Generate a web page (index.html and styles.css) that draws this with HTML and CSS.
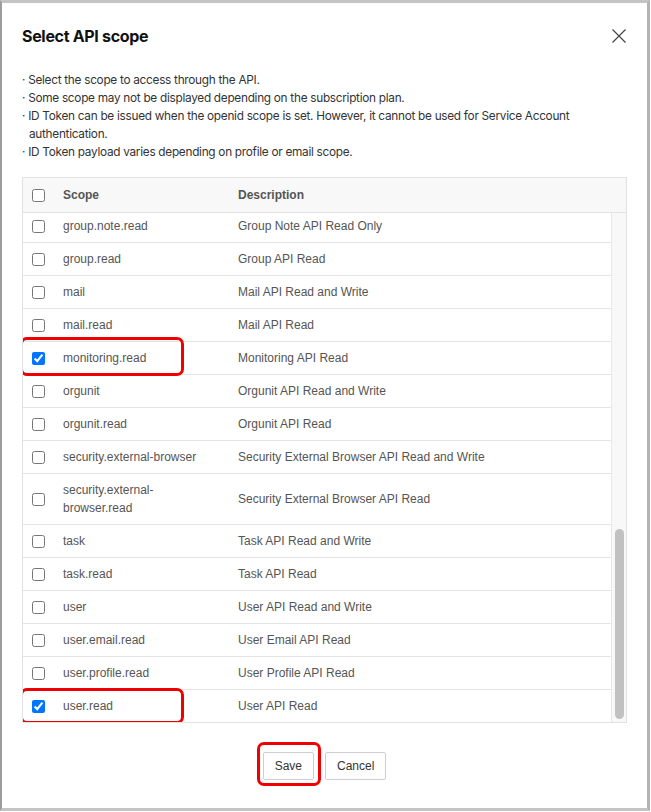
FILE: index.html
```html
<!DOCTYPE html>
<html lang="en">
<head>
<meta charset="utf-8">
<title>Select API scope</title>
<link rel="stylesheet" href="styles.css">
</head>
<body>
<div class="modal">
  <div class="modal-head">
    <h1 class="title">Select API scope</h1>
    <button class="close" type="button" aria-label="Close">
      <svg width="14" height="14" viewBox="0 0 14 14"><path d="M0.5 0.5 L13.5 13.5 M13.5 0.5 L0.5 13.5" stroke="#444" stroke-width="1.2" fill="none"/></svg>
    </button>
  </div>
  <ul class="notes">
    <li>· Select the scope to access through the API.</li>
    <li>· Some scope may not be displayed depending on the subscription plan.</li>
    <li>· ID Token can be issued when the openid scope is set. However, it cannot be used for Service Account authentication.</li>
    <li>· ID Token payload varies depending on profile or email scope.</li>
  </ul>
  <div class="table">
    <div class="row head-row">
      <div class="cell chk"><input type="checkbox"></div>
      <div class="cell scope">Scope</div>
      <div class="cell desc">Description</div>
    </div>
    <div class="tbody">
      <div class="rows">
        <div class="row"><div class="cell chk"><input type="checkbox"></div><div class="cell scope">group.note.read</div><div class="cell desc">Group Note API Read Only</div></div>
        <div class="row"><div class="cell chk"><input type="checkbox"></div><div class="cell scope">group.read</div><div class="cell desc">Group API Read</div></div>
        <div class="row"><div class="cell chk"><input type="checkbox"></div><div class="cell scope">mail</div><div class="cell desc">Mail API Read and Write</div></div>
        <div class="row"><div class="cell chk"><input type="checkbox"></div><div class="cell scope">mail.read</div><div class="cell desc">Mail API Read</div></div>
        <div class="row marked"><div class="cell chk"><input type="checkbox" checked></div><div class="cell scope">monitoring.read</div><div class="cell desc">Monitoring API Read</div><span class="highlight hl-row"></span></div>
        <div class="row"><div class="cell chk"><input type="checkbox"></div><div class="cell scope">orgunit</div><div class="cell desc">Orgunit API Read and Write</div></div>
        <div class="row"><div class="cell chk"><input type="checkbox"></div><div class="cell scope">orgunit.read</div><div class="cell desc">Orgunit API Read</div></div>
        <div class="row"><div class="cell chk"><input type="checkbox"></div><div class="cell scope">security.external-browser</div><div class="cell desc">Security External Browser API Read and Write</div></div>
        <div class="row"><div class="cell chk"><input type="checkbox"></div><div class="cell scope">security.external-browser.read</div><div class="cell desc">Security External Browser API Read</div></div>
        <div class="row"><div class="cell chk"><input type="checkbox"></div><div class="cell scope">task</div><div class="cell desc">Task API Read and Write</div></div>
        <div class="row"><div class="cell chk"><input type="checkbox"></div><div class="cell scope">task.read</div><div class="cell desc">Task API Read</div></div>
        <div class="row"><div class="cell chk"><input type="checkbox"></div><div class="cell scope">user</div><div class="cell desc">User API Read and Write</div></div>
        <div class="row"><div class="cell chk"><input type="checkbox"></div><div class="cell scope">user.email.read</div><div class="cell desc">User Email API Read</div></div>
        <div class="row"><div class="cell chk"><input type="checkbox"></div><div class="cell scope">user.profile.read</div><div class="cell desc">User Profile API Read</div></div>
        <div class="row marked last"><div class="cell chk"><input type="checkbox" checked></div><div class="cell scope">user.read</div><div class="cell desc">User API Read</div><span class="highlight hl-last"></span></div>
      </div>
      <div class="scrollbar"><div class="thumb"></div></div>
    </div>
  </div>
  <div class="actions">
    <span class="marked-btn"><button class="btn" type="button">Save</button><span class="highlight hl-btn"></span></span>
    <button class="btn" type="button">Cancel</button>
  </div>
</div>
</body>
</html>
```
FILE: styles.css
```css
* { box-sizing: border-box; }
html, body { margin: 0; padding: 0; background: #fff; }

.modal {
  width: 650px;
  height: 811px;
  border-top: 3px solid #c4c4c4;
  border-left: 2px solid #9c9c9c;
  border-right: 3px solid #b4b4b4;
  border-bottom: 3px solid #c4c4c4;
  padding: 21px 20px 0 20px;
  font-family: "Liberation Sans", Arial, sans-serif;
  display: flex;
  flex-direction: column;
}

.modal-head {
  display: flex;
  align-items: center;
  justify-content: space-between;
  height: 24px;
}
.title {
  margin: 0;
  font-family: Inter, "Noto Sans", sans-serif;
  font-size: 16px;
  font-weight: 700;
  line-height: 24px;
  color: #111;
  letter-spacing: -0.32px;
}
.close {
  border: 0;
  background: none;
  padding: 0;
  width: 14px;
  height: 14px;
  margin-right: 1px;
  display: block;
}
.close svg { display: block; }

.notes {
  list-style: none;
  margin: 23px 0 0;
  padding: 0;
  font-family: Inter, "Noto Sans", sans-serif;
  font-size: 11.8px;
  line-height: 18px;
  color: #333;
  letter-spacing: -0.28px;
}
.notes li {
  padding-left: 7px;
  text-indent: -7px;
}

.table {
  margin-top: 16px;
  border: 1px solid #e2e2e2;
  display: flex;
  flex-direction: column;
}

.row {
  position: relative;
  display: grid;
  grid-template-columns: 40px 175px 1fr;
  border-bottom: 1px solid #e4e4e4;
  font-size: 12px;
  line-height: 18px;
  color: #555;
}
.row.last { border-bottom: 0; }
.cell {
  padding: 7px 0;
  display: flex;
  align-items: center;
}
.cell.chk { padding-left: 9px; }
.cell.scope { padding-right: 18px; }
.cell input {
  margin: 0;
  width: 13px;
  height: 13px;
}

.head-row {
  background: #f8f8f8;
  font-weight: 700;
  color: #555;
  height: 35px;
  border-bottom: 1px solid #e2e2e2;
}
.head-row .cell { padding-top: 0; padding-bottom: 0; }

.tbody {
  display: flex;
  height: 509px;
}
.rows {
  flex: 1;
  display: flex;
  flex-direction: column;
  justify-content: flex-end;
  overflow: hidden;
}
.rows .row { flex: none; }

.scrollbar {
  width: 15px;
  background: #f8f8f8;
  border-left: 1px solid #e8e8e8;
  display: flex;
  flex-direction: column;
  justify-content: flex-end;
  padding: 0 2px 3px 3px;
}
.thumb {
  height: 190px;
  background: #c1c1c1;
  border-radius: 5px;
}

.highlight {
  position: absolute;
  border: 3px solid #f00000;
  border-radius: 7px;
  pointer-events: none;
}
.hl-row { left: -3px; top: -5px; width: 164px; height: 39px; }
.hl-last { left: -3px; top: -2px; width: 164px; height: 36px; }

.actions {
  margin-top: 29px;
  display: flex;
  justify-content: center;
  gap: 11px;
}
.marked-btn { position: relative; display: block; }
.btn {
  display: block;
  height: 28px;
  padding: 0 11px;
  border: 1px solid #cfcfcf;
  border-radius: 2px;
  background: #fff;
  font-family: "Liberation Sans", Arial, sans-serif;
  font-size: 12px;
  color: #333;
}
.hl-btn { left: -6px; top: -10px; width: 64px; height: 44px; }
```
